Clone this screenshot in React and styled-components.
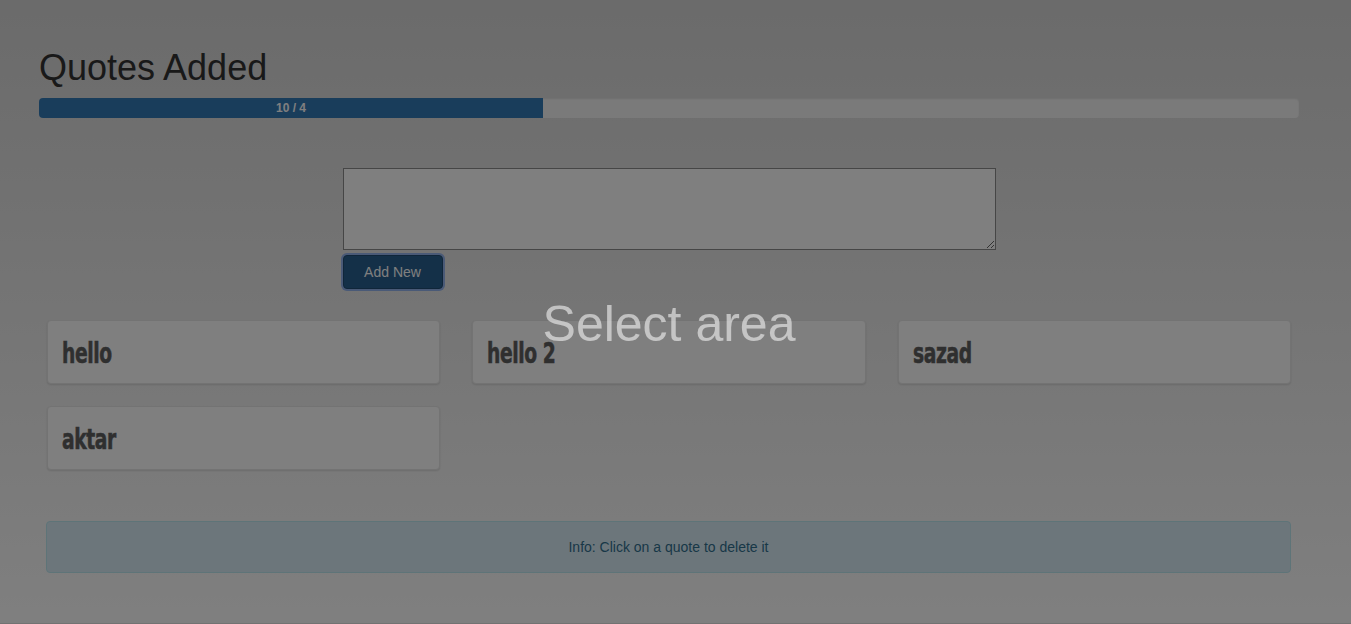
import { useState } from 'react';
import styled, { createGlobalStyle } from 'styled-components';

const GlobalStyle = createGlobalStyle`
  html, body {
    margin: 0;
    padding: 0;
  }
  body {
    font-family: "Liberation Sans", Arial, sans-serif;
    font-size: 14px;
    color: #333;
    min-height: 100vh;
    background: linear-gradient(#d6d6d6, #ffffff 624px);
    background-attachment: fixed;
  }
  * {
    box-sizing: border-box;
  }
`;

const Container = styled.div`
  padding: 48px 52px 0 39px;
`;

const Title = styled.h1`
  margin: 0 0 10px;
  font-size: 36px;
  font-weight: 400;
  line-height: 1.1;
  color: #333;
`;

const Progress = styled.div`
  height: 20px;
  border-radius: 4px;
  background: #f5f5f5;
  box-shadow: inset 0 1px 2px rgba(0, 0, 0, 0.1);
  overflow: hidden;
`;

const ProgressFill = styled.div`
  height: 100%;
  background: #337ab7;
  color: #fff;
  font-size: 12px;
  font-weight: 700;
  line-height: 20px;
  text-align: center;
`;

const Form = styled.form`
  width: 653px;
  margin: 50px auto 0;
  display: flex;
  flex-direction: column;
  align-items: flex-start;
  gap: 5px;
`;

const TextArea = styled.textarea`
  width: 653px;
  height: 82px;
  border: 1px solid #8c8c8c;
  background: #fff;
  font-family: inherit;
  font-size: 14px;
  padding: 2px;
  resize: both;
`;

const Button = styled.button`
  width: 100px;
  height: 34px;
  border: 1px solid #204d74;
  border-radius: 4px;
  background: #286090;
  color: #fff;
  font-family: inherit;
  font-size: 14px;
  box-shadow: 0 0 0 2px #94b4ee;
  cursor: pointer;
`;

const Grid = styled.div`
  margin: 31px 8px 0;
  display: grid;
  grid-template-columns: repeat(3, 1fr);
  column-gap: 32px;
  row-gap: 22px;
`;

const Card = styled.div`
  height: 64px;
  display: flex;
  align-items: center;
  padding: 0 14px;
  background: #fff;
  border: 1px solid #e6e6e6;
  border-radius: 4px;
  box-shadow: 0 1px 2px rgba(0, 0, 0, 0.12);
  cursor: pointer;
`;

const Quote = styled.h2`
  margin: 2px 0 0;
  display: inline-block;
  font-family: "DejaVu Sans Condensed", "Liberation Sans", sans-serif;
  font-size: 26px;
  font-weight: 700;
  letter-spacing: -0.5px;
  color: #5e5e5e;
  -webkit-text-stroke: 0.5px #5e5e5e;
  white-space: nowrap;
  transform: scale(0.8, 1.08);
  transform-origin: left center;
`;

const Alert = styled.div`
  margin: 51px 8px 0 7px;
  height: 52px;
  display: flex;
  align-items: center;
  justify-content: center;
  background: #d9edf7;
  border: 1px solid #bce8f1;
  border-radius: 4px;
  color: #31708f;
  font-size: 14px;
`;

const Overlay = styled.div`
  position: fixed;
  inset: 0;
  background: rgba(0, 0, 0, 0.5);
  display: flex;
  align-items: center;
  justify-content: center;
  padding: 24px 13px 0 0;
  border-bottom: 1px solid rgba(0, 0, 0, 0.1);
`;

const OverlayText = styled.span`
  font-size: 50px;
  color: rgba(255, 255, 255, 0.55);
`;

const App = () => {
  const [quotes, setQuotes] = useState(['hello', 'hello 2', 'sazad', 'aktar']);
  const [text, setText] = useState('');
  const max = 4;
  const count = 10;

  const addQuote = (e) => {
    e.preventDefault();
    if (!text.trim()) return;
    setQuotes([...quotes, text]);
    setText('');
  };

  return (
    <>
      <GlobalStyle />
      <Container>
        <Title>Quotes Added</Title>
        <Progress>
          <ProgressFill style={{ width: '40%' }}>
            {count} / {max}
          </ProgressFill>
        </Progress>
        <Form onSubmit={addQuote}>
          <TextArea value={text} onChange={(e) => setText(e.target.value)} />
          <Button type="submit">Add New</Button>
        </Form>
        <Grid>
          {quotes.map((q, i) => (
            <Card key={i} onClick={() => setQuotes(quotes.filter((_, j) => j !== i))}>
              <Quote>{q}</Quote>
            </Card>
          ))}
        </Grid>
        <Alert>Info: Click on a quote to delete it</Alert>
      </Container>
      <Overlay>
        <OverlayText>Select area</OverlayText>
      </Overlay>
    </>
  );
};

export default App;
